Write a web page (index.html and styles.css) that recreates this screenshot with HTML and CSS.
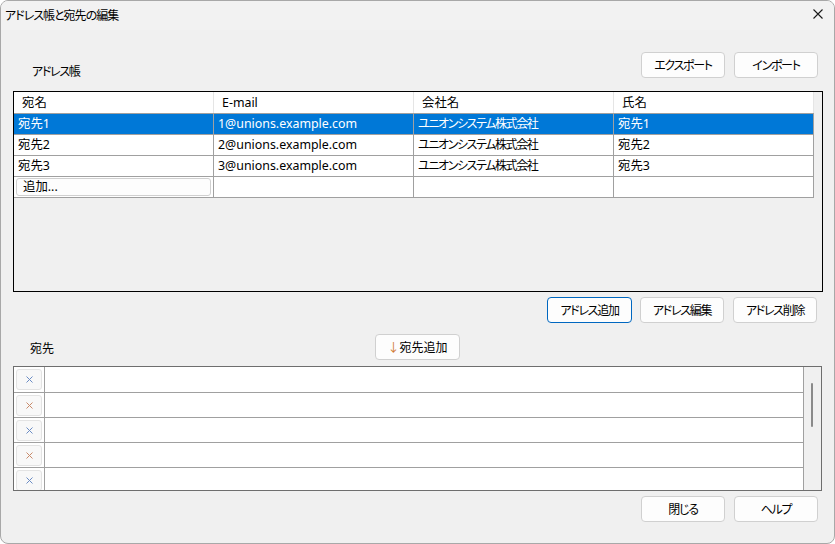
FILE: index.html
```html
<!DOCTYPE html>
<html lang="ja">
<head>
<meta charset="utf-8">
<title>アドレス帳と宛先の編集</title>
<link rel="stylesheet" href="styles.css">
</head>
<body>
<div class="window">
  <div class="titlebar">
    <span class="title">アドレス帳と宛先の編集</span>
    <svg class="close" width="10" height="10" viewBox="0 0 10 10"><path d="M0.5 0.5L9.5 9.5M9.5 0.5L0.5 9.5" stroke="#1a1a1a" stroke-width="1.1" fill="none"/></svg>
  </div>
  <div class="content">
    <div class="toprow">
      <span class="label label-book">アドレス帳</span>
      <div class="btns">
        <button class="btn">エクスポート</button>
        <button class="btn">インポート</button>
      </div>
    </div>
    <div class="table">
      <div class="row head">
        <div class="cell">宛名</div><div class="cell">E-mail</div><div class="cell">会社名</div><div class="cell">氏名</div>
      </div>
      <div class="row sel">
        <div class="cell">宛先1</div><div class="cell">1@unions.example.com</div><div class="cell co">ユニオンシステム株式会社</div><div class="cell">宛先1</div>
      </div>
      <div class="row">
        <div class="cell">宛先2</div><div class="cell">2@unions.example.com</div><div class="cell co">ユニオンシステム株式会社</div><div class="cell">宛先2</div>
      </div>
      <div class="row">
        <div class="cell">宛先3</div><div class="cell">3@unions.example.com</div><div class="cell co">ユニオンシステム株式会社</div><div class="cell">宛先3</div>
      </div>
      <div class="row addrow">
        <div class="cell addcell"><span class="addbtn">追加...</span></div><div class="cell"></div><div class="cell"></div><div class="cell"></div>
      </div>
    </div>
    <div class="midbtns">
      <button class="btn focused wide">アドレス追加</button>
      <button class="btn">アドレス編集</button>
      <button class="btn">アドレス削除</button>
    </div>
    <div class="destrow">
      <span class="label label-dest">宛先</span>
      <button class="btn addto"><span class="arrow">↓</span>宛先追加</button>
    </div>
    <div class="list">
      <div class="rows">
        <div class="lrow"><div class="xcell"><span class="xbtn blue"><svg width="7" height="7" viewBox="0 0 7 7"><path d="M0.5 0.5L6.5 6.5M6.5 0.5L0.5 6.5" stroke="currentColor" stroke-width="1" fill="none"/></svg></span></div><div class="lcell"></div></div>
        <div class="lrow"><div class="xcell"><span class="xbtn orange"><svg width="7" height="7" viewBox="0 0 7 7"><path d="M0.5 0.5L6.5 6.5M6.5 0.5L0.5 6.5" stroke="currentColor" stroke-width="1" fill="none"/></svg></span></div><div class="lcell"></div></div>
        <div class="lrow"><div class="xcell"><span class="xbtn blue"><svg width="7" height="7" viewBox="0 0 7 7"><path d="M0.5 0.5L6.5 6.5M6.5 0.5L0.5 6.5" stroke="currentColor" stroke-width="1" fill="none"/></svg></span></div><div class="lcell"></div></div>
        <div class="lrow"><div class="xcell"><span class="xbtn orange"><svg width="7" height="7" viewBox="0 0 7 7"><path d="M0.5 0.5L6.5 6.5M6.5 0.5L0.5 6.5" stroke="currentColor" stroke-width="1" fill="none"/></svg></span></div><div class="lcell"></div></div>
        <div class="lrow"><div class="xcell"><span class="xbtn blue"><svg width="7" height="7" viewBox="0 0 7 7"><path d="M0.5 0.5L6.5 6.5M6.5 0.5L0.5 6.5" stroke="currentColor" stroke-width="1" fill="none"/></svg></span></div><div class="lcell"></div></div>
      </div>
      <div class="scrollbar"><div class="thumb"></div></div>
    </div>
    <div class="bottombtns">
      <button class="btn">閉じる</button>
      <button class="btn">ヘルプ</button>
    </div>
  </div>
</div>
</body>
</html>
```

FILE: styles.css
```css
* { box-sizing: border-box; }
html, body { margin: 0; padding: 0; background: #ffffff; }
body {
  font-family: "Noto Sans", "Noto Sans CJK JP", sans-serif;
  font-size: 12px;
  color: #000;
  font-feature-settings: "palt";
}
.window {
  width: 835px;
  height: 544px;
  background: #f0f0f0;
  border: 1px solid #a8a8a8;
  border-radius: 8px;
  overflow: hidden;
  display: flex;
  flex-direction: column;
}
.titlebar {
  height: 29px;
  display: flex;
  align-items: center;
  justify-content: space-between;
  padding: 0 11px 1px 4px;
  background: #f2f2f2;
}
.title { font-family: "Noto Sans CJK JP", sans-serif; font-size: 12px; line-height: 16px; letter-spacing: -1px; }
.close { display: block; margin-top: -2px; }
.content {
  padding: 0 16px 0 12px;
  display: flex;
  flex-direction: column;
}
.btn {
  font-family: "Noto Sans CJK JP", sans-serif;
  font-feature-settings: "palt";
  font-size: 12px;
  letter-spacing: -1.3px;
  width: 84px;
  height: 26px;
  padding: 0;
  background: #fdfdfd;
  border: 1px solid #d0d0d0;
  border-radius: 4px;
  color: #000;
  line-height: 24px;
}
.btn.wide { width: 85px; }
.btn.focused { border-color: #0067c0; }
.toprow {
  margin-top: 22px;
  display: flex;
  justify-content: space-between;
  align-items: flex-start;
  height: 26px;
}
.btns { display: flex; gap: 9px; }
.label { font-family: "Noto Sans CJK JP", sans-serif; font-size: 12px; line-height: 16px; letter-spacing: -1.3px; }
.label-book { margin: 11px 0 0 19px; }
.label-dest { letter-spacing: 0; }
.table {
  margin-top: 13px;
  height: 201px;
  border: 1px solid #000;
  background: #f0f0f0;
  display: flex;
  flex-direction: column;
  width: 810px;
}
.row { display: flex; height: 21px; border-bottom: 1px solid #a0a0a0; width: 800px; background: #fff; }
.row .cell {
  width: 200px;
  border-right: 1px solid #a0a0a0;
  padding: 0 4px;
  line-height: 20px;
  white-space: nowrap;
  overflow: hidden;
}
.cell { font-family: "Noto Sans", "Noto Sans CJK JP", sans-serif; font-size: 12.4px; }
.cell.co { font-size: 12px; letter-spacing: -1.4px; }
.head { height: 22px; }
.head .cell { border-right-color: #e5e5e5; padding-left: 8px; line-height: 21px; }
.sel { background: #0078d7; color: #fff; }
.addcell { padding: 1px 2px 1px 2px !important; }
.addbtn {
  display: block;
  height: 18px;
  border: 1px solid #d0d0d0;
  border-radius: 3px;
  background: #fdfdfd;
  padding-left: 6px;
  line-height: 16px;
}
.midbtns {
  margin-top: 5px;
  margin-right: 1px;
  display: flex;
  justify-content: flex-end;
  gap: 8px;
}
.midbtns .btn:last-child { margin-left: 1px; }
.destrow {
  margin-top: 11px;
  display: flex;
  align-items: flex-start;
  height: 26px;
}
.label-dest { margin: 6px 0 0 17px; }
.addto { margin-left: 321px; width: 85px; letter-spacing: 0; }
.arrow { color: #d07a30; }
.list {
  margin-top: 6px;
  width: 809px;
  height: 125px;
  border: 1px solid #6e6e6e;
  display: flex;
  overflow: hidden;
}
.rows { width: 790px; background: #fff; border-right: 1px solid #a0a0a0; }
.lrow { display: flex; height: 25px; border-bottom: 1px solid #a0a0a0; }
.lrow:first-child { height: 26px; }
.xcell { width: 31px; border-right: 1px solid #a0a0a0; padding: 2px 2px 1px 2px; }
.lrow:first-child .xcell { padding-top: 2px; padding-bottom: 2px; }
.xbtn {
  display: flex;
  align-items: center;
  justify-content: center;
  height: 21px;
  border: 1px solid #e3e3e3;
  border-radius: 3px;
  background: #f8f8f8;
}
.xbtn svg { display: block; }
.blue { color: #6b8cc4; }
.orange { color: #c88a6a; }
.lcell { flex: 1; }
.scrollbar { flex: 1; background: #f0f0f0; position: relative; }
.thumb {
  position: absolute;
  left: 7px;
  top: 16px;
  width: 2px;
  height: 44px;
  background: #8a8a8a;
  border-radius: 1px;
}
.bottombtns {
  margin-top: 5px;
  display: flex;
  justify-content: flex-end;
  gap: 9px;
}
```
